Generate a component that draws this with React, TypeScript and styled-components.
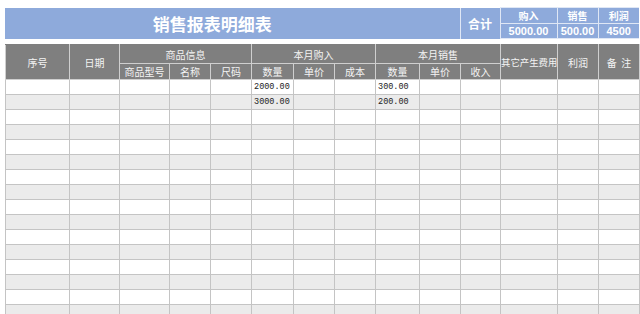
import styled, { createGlobalStyle } from 'styled-components'

const GlobalStyle = createGlobalStyle`
  body {
    margin: 0;
    background: #fff;
    font-family: 'Noto Sans CJK SC', 'Noto Sans', sans-serif;
  }
`

const Sheet = styled.div`
  width: 640px;
  height: 314px;
  overflow: hidden;
  box-sizing: border-box;
  padding: 7px 0 0 5px;
  display: flex;
  flex-direction: column;
  gap: 5px;
`

const Grid = styled.table`
  width: 634px;
  border-collapse: collapse;
  table-layout: fixed;

  td {
    padding: 0;
    overflow: hidden;
    white-space: nowrap;
    box-sizing: border-box;
  }
`

const Row = styled.tr<{ $h: number }>`
  height: ${(p) => p.$h}px;
`

const Banner = styled.td`
  background: #8eaadb;
  color: #fff;
  font-size: 17px;
  font-weight: 700;
  text-align: center;
  padding-right: 40px !important;
  border-right: 1px solid #dfe7f5;
`

const TotalLabel = styled.td`
  background: #8eaadb;
  color: #fff;
  font-size: 12px;
  font-weight: 700;
  text-align: center;
  border: 1px solid #dfe7f5;
  border-top: none;
  border-bottom: none;
`

const SumCell = styled.td<{ $num?: boolean }>`
  background: #8eaadb;
  color: #fff;
  text-align: center;
  font-weight: 700;
  font-size: ${(p) => (p.$num ? '11px' : '10px')};
  font-family: ${(p) =>
    p.$num ? "'Liberation Sans', Arial, sans-serif" : "'Noto Sans CJK SC', sans-serif"};
  border: 1px solid #dfe7f5;
  border-right: none;
`

const Head = styled.td<{ $tight?: boolean }>`
  background: #7f7f7f;
  color: #f4f4f4;
  font-size: ${(p) => (p.$tight ? '9.4px' : '10px')};
  text-align: center;
  border: 1px solid #cfcfcf;
  border-top-color: #7f7f7f;
`

const Cell = styled.td<{ $alt: boolean }>`
  background: ${(p) => (p.$alt ? '#ebebeb' : '#fff')};
  border: 1px solid #c4c4c4;
  color: #222;
  font-family: 'Liberation Mono', 'DejaVu Sans Mono', monospace;
  font-size: 8.5px;
  padding-left: 2px !important;
  vertical-align: middle;
`

const widths = [64, 50, 50, 41, 41, 42, 41, 41, 44, 41, 40, 57, 41, 41]

const rows = Array.from({ length: 16 }, (_, i) => {
  const r: string[] = Array(14).fill('')
  if (i === 0) {
    r[5] = '2000.00'
    r[8] = '300.00'
  }
  if (i === 1) {
    r[5] = '3000.00'
    r[8] = '200.00'
  }
  return r
})

export default function App() {
  return (
    <>
      <GlobalStyle />
      <Sheet>
        <Grid>
          <colgroup>
            {[455, 40, 57, 41, 41].map((w, i) => (
              <col key={i} style={{ width: w }} />
            ))}
          </colgroup>
          <tbody>
            <Row $h={15}>
              <Banner rowSpan={2}>销售报表明细表</Banner>
              <TotalLabel rowSpan={2}>合计</TotalLabel>
              <SumCell>购入</SumCell>
              <SumCell>销售</SumCell>
              <SumCell>利润</SumCell>
            </Row>
            <Row $h={15}>
              <SumCell $num>5000.00</SumCell>
              <SumCell $num>500.00</SumCell>
              <SumCell $num>4500</SumCell>
            </Row>
          </tbody>
        </Grid>
        <Grid>
          <colgroup>
            {widths.map((w, i) => (
              <col key={i} style={{ width: w }} />
            ))}
          </colgroup>
          <tbody>
            <Row $h={19}>
              <Head rowSpan={2}>序号</Head>
              <Head rowSpan={2}>日期</Head>
              <Head colSpan={3}>商品信息</Head>
              <Head colSpan={3}>本月购入</Head>
              <Head colSpan={3}>本月销售</Head>
              <Head rowSpan={2} $tight>
                其它产生费用
              </Head>
              <Head rowSpan={2}>利润</Head>
              <Head rowSpan={2}>备&nbsp;&nbsp;注</Head>
            </Row>
            <Row $h={14}>
              {['商品型号', '名称', '尺码', '数量', '单价', '成本', '数量', '单价', '收入'].map(
                (t, i) => (
                  <Head key={i}>{t}</Head>
                ),
              )}
            </Row>
            {rows.map((r, i) => (
              <Row $h={15} key={i}>
                {r.map((v, j) => (
                  <Cell key={j} $alt={i % 2 === 1}>
                    {v}
                  </Cell>
                ))}
              </Row>
            ))}
          </tbody>
        </Grid>
      </Sheet>
    </>
  )
}
